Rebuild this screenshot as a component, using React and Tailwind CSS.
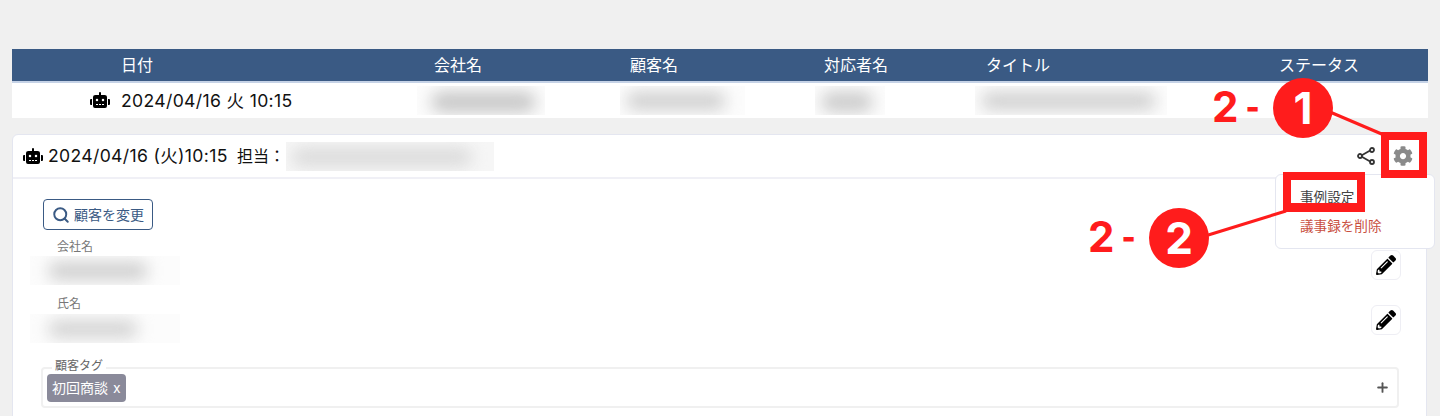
import React from 'react';
import { FaRobot, FaCog, FaPencilAlt } from 'react-icons/fa';
import { FiPlus, FiSearch } from 'react-icons/fi';

const font = { fontFamily: 'Inter, "Noto Sans CJK JP", sans-serif' };

const Blur = ({ className, blobClass }) => (
  <div className={`overflow-hidden ${className}`}>
    <div className={`rounded-full blur-[8px] ${blobClass}`}></div>
  </div>
);

const ShareIcon = () => (
  <svg width="18" height="18" viewBox="0 0 18 18" fill="none" stroke="#333" strokeWidth="1.8">
    <line x1="3.5" y1="9" x2="14" y2="3" />
    <line x1="3.5" y1="9" x2="14" y2="15" />
    <circle cx="3" cy="9" r="2" fill="#fff" />
    <circle cx="15" cy="3" r="2" fill="#fff" />
    <circle cx="15" cy="15" r="2" fill="#fff" />
  </svg>
);

const EditButton = () => (
  <button className="w-[30px] h-[30px] flex items-center justify-center bg-white border border-[#eeeef4] rounded-md">
    <FaPencilAlt className="text-[20px] text-black" />
  </button>
);

const Callout = ({ number, left, top, labelLeft, labelTop }) => (
  <>
    <div
      className={`absolute flex items-center gap-[7px] text-[#ff1c1c] font-bold text-[42px] leading-none ${labelLeft} ${labelTop}`}
    >
      <span>2</span>
      <span className="text-[30px] font-black">-</span>
    </div>
    <div
      className={`absolute w-[60px] h-[60px] rounded-full bg-[#ff1c1c] text-white font-bold text-[44px] flex items-center justify-center ${left} ${top}`}
    >
      {number}
    </div>
  </>
);

const App = () => {
  return (
    <div style={font} className="relative w-[1440px] h-[416px] overflow-hidden bg-[#f0f0f0] px-3 pt-[49px] text-[#111]">
      {/* list table */}
      <div className="w-[1416px]">
        <div className="h-[34px] flex items-center bg-[#3a5a84] border-b-2 border-[#c5d2e6] text-white text-[16px]">
          <span className="w-[422px] pl-[109px]">日付</span>
          <span className="w-[196px]">会社名</span>
          <span className="w-[194px]">顧客名</span>
          <span className="w-[162px]">対応者名</span>
          <span className="w-[293px]">タイトル</span>
          <span>ステータス</span>
        </div>
        <div className="h-[35px] flex items-center bg-white">
          <div className="w-[405px] flex items-center">
            <FaRobot className="ml-[78px] text-[20px] w-[20px] text-black" />
            <span className="ml-[11px] pt-[2px] text-[17.6px] tracking-[0.33px] whitespace-nowrap">2024/04/16 火 10:15</span>
          </div>
          <Blur className="w-[128px] h-[29px] p-[6px] bg-[#fcfcfc]" blobClass="w-[105px] h-[20px] ml-[8px] bg-[#c6c6c6]" />
          <Blur className="w-[125px] h-[29px] p-[6px] ml-[75px] bg-[#fcfcfc]" blobClass="w-[100px] h-[18px] bg-[#cfcfcf]" />
          <Blur className="w-[70px] h-[29px] p-[6px] ml-[70px] bg-[#fcfcfc]" blobClass="w-[52px] h-[20px] bg-[#cbcbcb]" />
          <Blur className="w-[192px] h-[29px] p-[6px] ml-[90px] bg-[#fcfcfc]" blobClass="w-[175px] h-[18px] bg-[#d0d0d0]" />
        </div>
      </div>

      {/* detail card */}
      <div className="w-[1415px] mt-4 h-[300px] bg-white border border-[#e4e6f0] rounded-t-md">
        <div className="h-[44px] flex items-center border-b-2 border-[#f0f0f6] pl-[10px] pr-[13px]">
          <FaRobot className="text-[20px] w-[20px] text-black" />
          <span className="ml-[5px] w-[189px] text-[17.6px] tracking-[0.33px] whitespace-nowrap">2024/04/16 (火)10:15</span>
          <span className="w-[49px] text-[16px]">担当：</span>
          <Blur className="w-[208px] h-[29px] p-[6px] bg-[#f6f6f6]" blobClass="w-[180px] h-[18px] bg-[#dadada]" />
          <div className="ml-auto"><ShareIcon /></div>
          <FaCog className="ml-[18px] text-[20px] text-[#8a8a8a]" />
        </div>

        <div className="pl-[30px] pr-[25px] pt-[20px]">
          <button className="w-[110px] h-[31px] flex items-center justify-center gap-[4px] border border-[#3a5a84] rounded text-[#3a5a84] text-[14px]">
            <FiSearch className="text-[18px]" strokeWidth={2.6} />
            顧客を変更
          </button>

          <div className="flex justify-between mt-[8px] h-[47px]">
            <div className="-ml-[13px]">
              <div className="pl-[27px] text-[12px] leading-[18px] text-[#777]">会社名</div>
              <Blur className="w-[150px] h-[29px] p-[6px] bg-[#fcfcfc]" blobClass="w-[100px] h-[18px] ml-[12px] bg-[#cfcfcf]" />
            </div>
            <div className="mt-[12px]"><EditButton /></div>
          </div>

          <div className="flex justify-between mt-[8px] h-[50px]">
            <div className="-ml-[13px]">
              <div className="pl-[27px] text-[12px] leading-[21px] text-[#777]">氏名</div>
              <Blur className="w-[150px] h-[29px] p-[6px] bg-[#fcfcfc]" blobClass="w-[90px] h-[18px] ml-[12px] bg-[#d4d4d4]" />
            </div>
            <div className="mt-[12px]"><EditButton /></div>
          </div>

          <div className="relative mt-[24px] -ml-[2px] w-[1358px] h-[41px] border-2 border-[#f0f0f0] rounded flex items-center pl-[4px] pr-[7px]">
            <span className="absolute -top-[11px] left-[9px] bg-white px-[3px] text-[12px] leading-[16px] text-[#666]">顧客タグ</span>
            <span className="h-[28px] flex items-center gap-[5px] bg-[#8a8a9a] rounded text-white text-[14px] px-[5px]">
              初回商談 <span>x</span>
            </span>
            <FiPlus className="ml-auto text-[15px] text-[#555]" strokeWidth={3} />
          </div>
        </div>
      </div>

      {/* settings dropdown */}
      <div className="absolute left-[1275px] top-[174px] w-[160px] h-[75px] bg-white border border-[#e4e6f0] rounded-md pl-[24px] pt-[12px] text-[13.6px] leading-[20px]">
        <div className="text-[#444]">事例設定</div>
        <div className="mt-[9px] text-[#c9503f]">議事録を削除</div>
      </div>

      {/* annotations */}
      <div className="absolute left-[1381px] top-[132px] w-[46px] h-[46px] border-[8px] border-[#ff1c1c]"></div>
      <div className="absolute left-[1283px] top-[172px] w-[82px] h-[40px] border-[8px] border-b-[9px] border-[#ff1c1c]"></div>
      <svg className="absolute left-0 top-0 pointer-events-none" width="1440" height="416">
        <line x1="1330" y1="112" x2="1384" y2="135" stroke="#ff1c1c" strokeWidth="3" />
        <line x1="1205" y1="236" x2="1286" y2="211" stroke="#ff1c1c" strokeWidth="3" />
      </svg>
      <Callout number="1" left="left-[1273px]" top="top-[78px]" labelLeft="left-[1212px]" labelTop="top-[86px]" />
      <Callout number="2" left="left-[1149px]" top="top-[208px]" labelLeft="left-[1088px]" labelTop="top-[216px]" />
    </div>
  );
};

export default App;
